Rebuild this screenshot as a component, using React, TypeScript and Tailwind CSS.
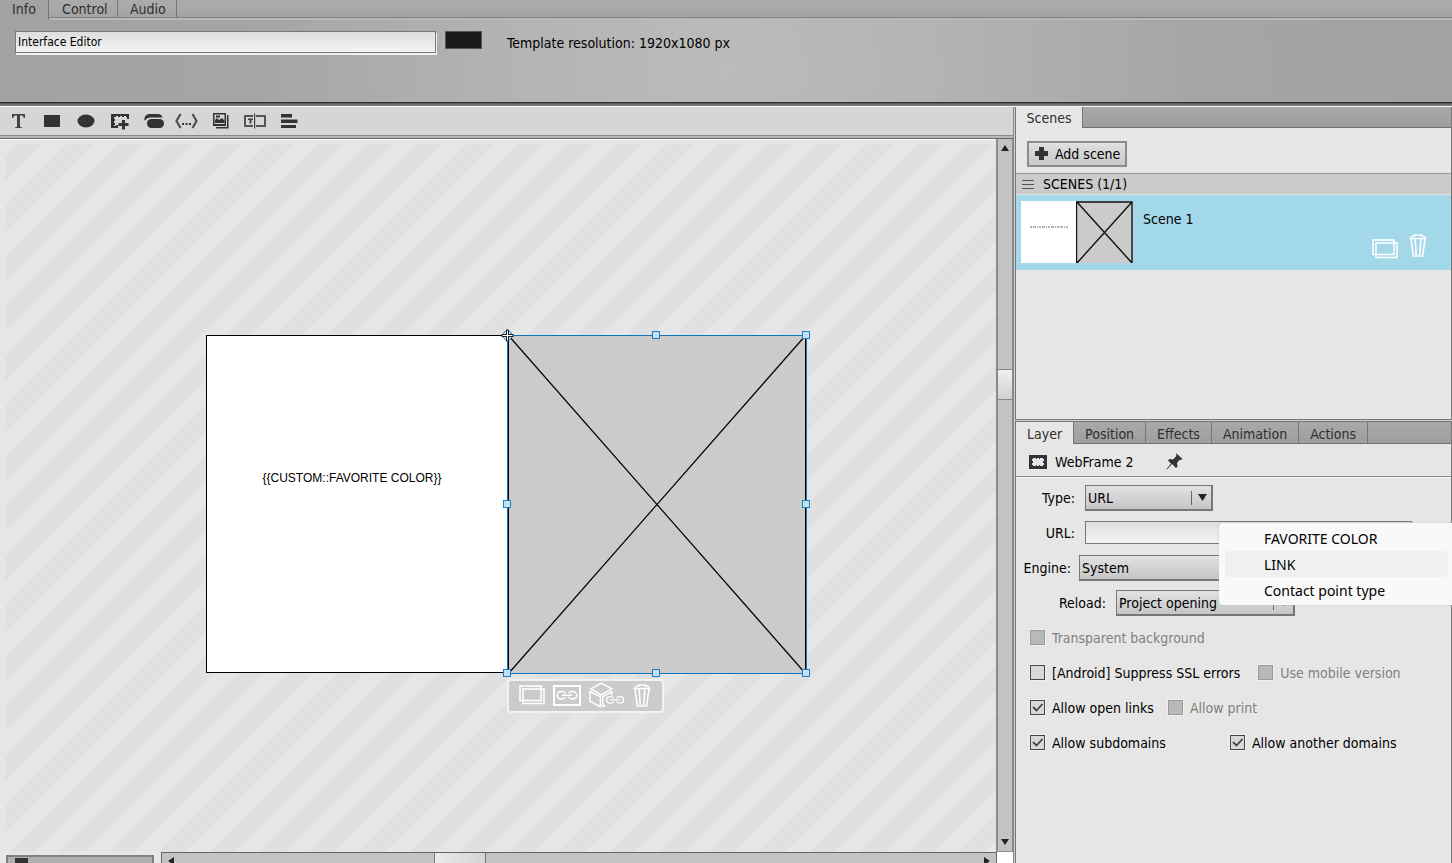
import { useState } from "react";
import type { ReactNode } from "react";
import clsx from "clsx";

/* --- ICONS --- */

function DuplicateIcon() {
  return (
    <svg width="26" height="20" viewBox="0 0 26 20" fill="none" stroke="#fff" strokeWidth="1.6">
      <rect x="1" y="1" width="21" height="14.5" />
      <rect x="4" y="4" width="21" height="14.5" />
    </svg>
  );
}

function TrashIcon() {
  return (
    <svg width="18" height="23" viewBox="0 0 18 23" fill="none" stroke="#fff" strokeWidth="1.6">
      <path d="M0.5 4.5h17M2 3.600C2 2.600 3 2.200 5.500 2V1h7v1C15 2.200 16 2.600 16 3.600M2 5l2.400 17h9.200L16 5M6.200 5l1 16M11.800 5l-1 16" />
    </svg>
  );
}

function FrameLinkIcon() {
  return (
    <svg width="28" height="21" viewBox="0 0 28 21" fill="none" stroke="#fff" strokeWidth="1.5">
      <rect x="1" y="1" width="26" height="19" strokeWidth="2" />
      <path d="M12.5 8.4A4 4 0 0 0 9 6.6H8a3.7 3.7 0 0 0 0 7.4h1a4 4 0 0 0 3.500-1.800M15.500 8.400A4 4 0 0 1 19 6.600h1a3.700 3.700 0 0 1 0 7.400h-1a4 4 0 0 1-3.500-1.800M9 10.300h10" />
    </svg>
  );
}

function CubeLinkIcon() {
  return (
    <svg width="36" height="26" viewBox="0 0 38 27" fill="none" stroke="#fff" strokeWidth="1.6">
      <path d="M2 7 13 1l11 6-11 6.500z" />
      <path d="M1 9.500v10.500l11 6V15.500zM14.500 26V15.500L24 10v4M14.500 26l3-1.500" />
      <path d="M26 16.800a3.500 3.500 0 0 0-3-1.600h-1a3.400 3.400 0 0 0 0 6.800h1a3.500 3.500 0 0 0 3-1.600M29 16.800a3.500 3.500 0 0 1 3-1.600h1a3.400 3.400 0 0 1 0 6.800h-1a3.500 3.500 0 0 1-3-1.600M22.500 18.600h10" strokeWidth="1.400" />
    </svg>
  );
}

function FrameIcon() {
  return (
    <svg width="18" height="14" viewBox="0 0 18 14">
      <path fill="#333" fillRule="evenodd" d="M0 0h18v14H0zM4 3v1H3v2h1v2H3v2h1v1h3v-1h1v1h2v-1h1v1h3v-1h1V8h-1V6h1V4h-1V3h-3v1h-1V3H8v1H7V3z" />
    </svg>
  );
}

const tools: { name: string; icon: ReactNode }[] = [
  {
    name: "Text",
    icon: <path d="M6 5h13v4h-1.200c-.3-1.700-1-2.500-2.500-2.500h-1.300V17c0 1 .6 1.300 2 1.300V19H9v-.7c1.400 0 2-.3 2-1.300V6.500H9.700C8.200 6.500 7.500 7.300 7.200 9H6z" fill="#444" />,
  },
  { name: "Rectangle", icon: <path d="M4 6h16v12H4z" /> },
  { name: "Ellipse", icon: <ellipse cx="12" cy="12" rx="8.500" ry="6.500" /> },
  {
    name: "Web frame",
    icon: (
      <>
        <path d="M3 5h18v5h-2V8h-1V7h-2v1h-2V7h-2v1h-2V7H8v1H6v2h1v2H6v2h1v2H6v1h2v-1h2v3H3z" />
        <path d="M14 11h3v3h3.500v3H17v3.500h-3V17h-3.500v-3H14z" />
      </>
    ),
  },
  {
    name: "Button",
    icon: (
      <>
        <rect x="5" y="10" width="17" height="9" rx="4.500" />
        <path d="M2.500 11C2 7.500 4.500 5 7.500 5H16c2.500 0 4 1.300 4.500 3.500H9C6 8.500 4 9.500 3.500 11.500z" />
      </>
    ),
  },
  {
    name: "Code",
    icon: (
      <>
        <path d="M5.500 5 1.500 12l4 7M17.500 5l4 7-4 7" fill="none" stroke="#505050" strokeWidth="2.200" />
        <path d="M7 14h2v2H7zM10.500 14h2v2h-2zM14 14h2v2h-2z" />
      </>
    ),
  },
  {
    name: "Gallery",
    icon: (
      <>
        <path fillRule="evenodd" d="M4 4h13v13H4zM5.500 5.500V15h10V5.500z" />
        <path d="M6 14v-3l2-2 2 2 3-2 2.500 2.500V14zM7 6.500h4v2H7z" />
        <path d="M18 6h1.500v13.500H7V18h11z" />
      </>
    ),
  },
  {
    name: "Input field",
    icon: (
      <>
        <path d="M10 7H2v10h8M13 7h9v10h-9" fill="none" stroke="#555" strokeWidth="2" />
        <path d="M11 4.500h1.200v15H11zM5 9.500h5V11H8.500v3.500H6.500V11H5z" fill="#444" />
      </>
    ),
  },
  { name: "Align", icon: <path d="M4 5h11v3.500H4zM4 10.500h16.500V14H4zM4 16h15v3H4z" /> },
];

/* --- SHARED PIECES --- */

function Select({ id, options, className }: { id: string; options: string[]; className: string }) {
  return (
    <div className={clsx("relative h-[26px]", className)}>
      <select
        id={id}
        className="h-full w-full appearance-none border border-r-2 border-b-2 border-[#777] bg-linear-to-b from-[#e2e2e2] to-[#c6c6c6] pt-px pl-[2px] outline-none"
      >
        {options.map((o) => (
          <option key={o}>{o}</option>
        ))}
      </select>
      <span className="pointer-events-none absolute inset-y-0 right-0 flex items-center gap-[6px] pr-[6px]">
        <span className="h-[14px] w-px bg-[#666]" />
        <svg width="9" height="7" viewBox="0 0 9 7">
          <path d="M0 0h9L4.500 7z" fill="#222" />
        </svg>
      </span>
    </div>
  );
}

function Check({ label, checked = false, disabled = false }: { label: string; checked?: boolean; disabled?: boolean }) {
  const [on, setOn] = useState(checked);
  return (
    <label className={clsx("flex items-center gap-[7px] whitespace-nowrap", disabled && "text-[#808080]")}>
      <span className="relative h-[15px] w-[15px]">
        <input
          type="checkbox"
          checked={on}
          disabled={disabled}
          onChange={() => setOn(!on)}
          className="block h-[15px] w-[15px] appearance-none border border-[#444] bg-[#d8d8d8] shadow-[0_0_0_1px_#f0f0f0] disabled:border-[#999] disabled:bg-[#b9b9b9]"
        />
        {on && (
          <svg className="pointer-events-none absolute inset-0" width="15" height="15" viewBox="0 0 15 15">
            <path d="M3 7l3.500 3.500L12.500 4" fill="none" stroke="#444" strokeWidth="1.800" />
          </svg>
        )}
      </span>
      {label}
    </label>
  );
}

const layerTabs = ["Layer", "Position", "Effects", "Animation", "Actions"];

/* --- HEADER --- */

function Header() {
  return (
    <header className="flex h-[107px] shrink-0 flex-col border-b border-[#f4f4f4] bg-[radial-gradient(circle_at_50%_66%,#bbbbbb_0,#b4b4b4_200px,#a5a5a5_480px,#a2a2a2_100%)]">
      <nav className="flex h-[20px] text-[#2e2e2e]">
        <button className="border-r border-[#777] px-[12px] pb-[2px]">Info</button>
        <div className="flex flex-1 border-b-2 border-[#b8b8b8] bg-linear-to-b from-[#ababab] to-[#a3a3a3]">
          <div className="flex flex-1 border-b border-[#808080]">
            <button className="w-[69px] border-r border-[#777] pl-[4px]">Control</button>
            <button className="w-[59px] border-r border-[#777] pl-[2px]">Audio</button>
          </div>
        </div>
      </nav>
      <div className="flex flex-1 items-start pt-[11px] pl-[15px]">
        <input
          aria-label="Name"
          defaultValue="Interface Editor"
          className="h-[22px] w-[421px] border border-[#777] bg-linear-to-b from-[#dedede] to-[#f3f3f3] px-[2px] text-[12px] shadow-[1px_2px_0_#f0f0f0] outline-none"
        />
        <button aria-label="Background colour" className="ml-[9px] h-[18px] w-[37px] border border-[#555] bg-[#1a1a1a]" />
        <span className="ml-[25px] pt-[3px]">Template resolution: 1920x1080 px</span>
      </div>
      <div className="h-[4px] border-t border-[#2c2c2c] bg-linear-to-b from-[#555] to-[#8a8a8a]" />
    </header>
  );
}

/* --- CANVAS --- */

const handles = [
  { x: 149, y: 0 },
  { x: 299, y: 0 },
  { x: 0, y: 169 },
  { x: 299, y: 169 },
  { x: 0, y: 338 },
  { x: 149, y: 338 },
  { x: 299, y: 338 },
];

function Stage() {
  return (
    <div className="absolute top-[195px] left-[206px] flex h-[338px] w-[601px]">
      <div className="flex w-[302px] justify-center border border-black bg-white pt-[133px] pr-[10px] font-['Liberation_Sans',sans-serif] text-[12px]">
        {"{{CUSTOM::FAVORITE COLOR}}"}
      </div>
      <div className="relative w-[299px] bg-[#cbcbcb]">
        <svg className="absolute top-[-6px] left-[-7px]" width="313" height="352" viewBox="-6.500 -6.500 313 352">
          <path d="M1 0 298 338M298 0 1 338" stroke="#000" strokeWidth="1.200" />
          <path d="M1 0V338M298 0V338" stroke="#000" strokeWidth="1" />
          <path d="M0 0H299V338H0Z" fill="none" stroke="#0e76bd" />
          {handles.map((h) => (
            <rect key={`${h.x}-${h.y}`} x={h.x - 4} y={h.y - 4} width="7" height="7" fill="#c3dff0" stroke="#1b7fc4" />
          ))}
          <circle r="4.500" fill="#c3dff0" stroke="#1b7fc4" />
          <path d="M-6 0H6M0-6V6" stroke="#222" strokeWidth="3" />
          <path d="M-5 0H5M0-5V5" stroke="#fff" strokeWidth="1" />
        </svg>
        <div className="absolute top-[344px] left-[-1px] flex h-[34px] w-[157px] items-center gap-[8px] rounded-[4px] border-2 border-[#f2f2f2] bg-[#cbcbcb] pb-[2px] pl-[10px]">
          <button aria-label="Duplicate"><DuplicateIcon /></button>
          <button aria-label="Link"><FrameLinkIcon /></button>
          <button aria-label="Link object"><CubeLinkIcon /></button>
          <button aria-label="Delete"><TrashIcon /></button>
        </div>
      </div>
    </div>
  );
}

function Editor() {
  return (
    <main className="flex min-w-0 flex-1 flex-col border-r border-[#888] bg-[#e6e6e6]">
      <div className="flex h-[28px] shrink-0 bg-[#d6d6d6]">
        <div className="flex w-[307px] items-center justify-between px-[3px]">
          {tools.map((t) => (
            <button key={t.name} aria-label={t.name} className="flex w-[30px] justify-center">
              <svg width="24" height="24" viewBox="0 0 24 24" fill="#333">{t.icon}</svg>
            </button>
          ))}
        </div>
      </div>
      <div className="h-[4px] shrink-0 border-y border-t-[#8a8a8a] border-b-[#666] bg-[#b9b7b9]" />
      <div className="flex min-h-0 flex-1">
        <div className="relative min-w-0 flex-1 overflow-hidden border-t border-white pt-[4px] pl-[5px]">
          <div className="h-full bg-[linear-gradient(135deg,#e6e6e6_12.5%,#e0e0e0_12.5%,#e0e0e0_37.5%,#e6e6e6_37.5%,#e6e6e6_62.5%,#e0e0e0_62.5%,#e0e0e0_87.5%,#e6e6e6_87.5%)] bg-size-[50px_50px]" />
          <Stage />
        </div>
        <div className="flex w-[17px] flex-col items-center border border-t-0 border-l-2 border-[#8a8a8a] bg-[#c3c3c3]">
          <button aria-label="Scroll up" className="flex h-[17px] items-center">
            <svg width="8" height="6" viewBox="0 0 8 6"><path d="M4 0l4 6H0z" fill="#222" /></svg>
          </button>
          <div className="h-[213px]" />
          <div className="h-[31px] w-full border-y border-[#888] bg-linear-to-b from-[#f0f0f0] to-[#d0d0d0]" />
          <div className="flex-1" />
          <button aria-label="Scroll down" className="flex h-[18px] items-center">
            <svg width="8" height="6" viewBox="0 0 8 6"><path d="M4 6l4-6H0z" fill="#222" /></svg>
          </button>
        </div>
      </div>
      <div className="flex h-[11px] shrink-0 overflow-hidden">
        <div className="mt-[3px] ml-[6px] w-[148px] border-2 border-b-0 border-[#808080] bg-[#b0b0b0] pl-[7px]">
          <div className="mt-px h-[6px] w-[13px] bg-[#333]" />
        </div>
        <div className="ml-[7px] flex flex-1 border-t border-l border-[#666] bg-[#c3c3c3]">
          <svg className="mt-[4px] ml-[6px]" width="6" height="8" viewBox="0 0 6 8"><path d="M6 0v8L0 4z" fill="#222" /></svg>
          <div className="ml-[260px] w-[52px] border-x border-[#777] bg-linear-to-r from-[#eaeaea] to-[#d4d4d4]" />
          <svg className="mt-[4px] mr-[6px] ml-auto" width="6" height="8" viewBox="0 0 6 8"><path d="M0 0v8l6-4z" fill="#222" /></svg>
        </div>
        <div className="w-[17px] border-l border-[#666] bg-white" />
      </div>
    </main>
  );
}

/* --- SIDE PANELS --- */

function ScenesPanel() {
  return (
    <section className="flex h-[313px] shrink-0 flex-col border border-t-0 border-[#777] bg-[#e6e6e6]">
      <nav className="flex h-[21px] text-[#2e2e2e]">
        <button className="w-[67px] border-r border-[#777] pt-px">Scenes</button>
        <div className="flex-1 border-b border-[#707070] bg-linear-to-b from-[#a9a9a9] to-[#9e9e9e]" />
      </nav>
      <div className="flex h-[45px] items-center pt-[6px] pl-[11px]">
        <button className="flex h-[26px] items-center gap-[6px] border-2 border-[#8c8c8c] bg-linear-to-b from-[#e0e0e0] to-[#c9c9c9] px-[5px]">
          <svg width="15" height="15" viewBox="0 0 15 15"><path d="M5 1h5v4h4v5h-4v4H5v-4H1V5h4z" fill="#333" /></svg>
          Add scene
        </button>
      </div>
      <div className="flex h-[22px] items-center gap-[9px] border-t border-b border-t-[#999] border-b-[#e0e0e0] bg-[#cbcbcb] pl-[6px]">
        <svg width="12" height="11" viewBox="0 0 12 11"><path d="M0 1.500h12M0 5.500h12M0 9.500h12" stroke="#555" /></svg>
        SCENES (1/1)
      </div>
      <div className="flex h-[75px] bg-[#a3d7ea] pt-[6px] pl-[5px]">
        <div className="flex h-[62px] w-[112px]">
          <div className="flex w-[55px] items-center justify-center bg-white pb-[10px]">
            <svg width="40" height="4" viewBox="0 0 40 4"><path d="M1 2h38" stroke="#a9b6b6" strokeWidth="2" strokeDasharray="2 1 3 1 1 1" /></svg>
          </div>
          <svg width="57" height="62" viewBox="0 0 57 62">
            <rect width="57" height="62" fill="#cbcbcb" />
            <path d="M0.500 62V1H56V62M1 1l55 61M56 1 1 62" fill="none" stroke="#111" strokeWidth="1.400" />
          </svg>
        </div>
        <span className="pt-[9px] pl-[10px]">Scene 1</span>
        <div className="mr-[24px] ml-auto flex items-center gap-[11px] pt-[20px]">
          <button aria-label="Duplicate scene" className="pt-[6px]"><DuplicateIcon /></button>
          <button aria-label="Delete scene"><TrashIcon /></button>
        </div>
      </div>
    </section>
  );
}

function VariableMenu() {
  const items = ["FAVORITE COLOR", "LINK", "Contact point type"];
  return (
    <div
      role="menu"
      className="absolute top-[8px] right-[-1px] z-10 flex w-[233px] flex-col rounded-l-[4px] bg-[#f9f9f9] py-[2px] pr-[4px] pl-[6px] font-['Noto_Sans',sans-serif] shadow-[0_0_2px_#bbb]"
    >
      {items.map((item) => (
        <button
          key={item}
          role="menuitem"
          className={clsx("h-[26px] rounded-[4px] pt-px pl-[39px] text-left", item === "LINK" && "bg-[#f0f0f0]")}
        >
          {item}
        </button>
      ))}
    </div>
  );
}

function LayerPanel() {
  const [tab, setTab] = useState("Layer");
  return (
    <section className="mt-px flex min-h-0 flex-1 flex-col border border-b-0 border-[#777] bg-[#e6e6e6]">
      <nav className="flex h-[22px] border-b border-[#707070] bg-linear-to-b from-[#a9a9a9] to-[#9e9e9e] text-[#2e2e2e]">
        {layerTabs.map((t) => (
          <button
            key={t}
            onClick={() => setTab(t)}
            className={clsx("border-r border-[#777] px-[11px] pt-[2px]", t === tab && "-mb-px bg-[#e6e6e6]")}
          >
            {t}
          </button>
        ))}
      </nav>
      <div className="flex h-[33px] shrink-0 items-center border-b border-[#888] pt-[4px] pl-[13px] shadow-[0_1px_0_#f8f8f8]">
        <FrameIcon />
        <span className="ml-[8px]">WebFrame 2</span>
        <button aria-label="Pin" className="mb-[2px] ml-[32px]">
          <svg width="17" height="17" viewBox="0 0 17 17">
            <path d="M10.500 0.500 16.500 6l-1.500 1-1-.5-3 3.500.5 3.500-1.500 1.500-4-4L1 16.500l-.5-.5 4.500-5.500-3-3L3.500 6l3.500.5L10.500 3 10 1.500z" fill="#333" />
          </svg>
        </button>
      </div>
      <form className="flex flex-col pt-[3px]" onSubmit={(e) => e.preventDefault()}>
        <div className="flex h-[35px] items-center">
          <label htmlFor="type" className="mr-[10px] w-[59px] text-right">Type:</label>
          <Select id="type" options={["URL"]} className="w-[128px]" />
        </div>
        <div className="relative flex h-[35px] items-center">
          <label htmlFor="url" className="mr-[10px] w-[59px] text-right">URL:</label>
          <input id="url" className="h-[23px] w-[327px] border border-[#777] bg-linear-to-b from-[#dedede] to-[#f3f3f3] px-[2px] outline-none" />
          <VariableMenu />
        </div>
        <div className="flex h-[35px] items-center">
          <label htmlFor="engine" className="mr-[8px] w-[55px] text-right">Engine:</label>
          <Select id="engine" options={["System"]} className="w-[192px]" />
        </div>
        <div className="flex h-[35px] items-center">
          <label htmlFor="reload" className="mr-[10px] w-[90px] text-right">Reload:</label>
          <Select id="reload" options={["Project opening"]} className="w-[179px]" />
        </div>
        <div className="flex h-[35px] items-center pl-[14px]">
          <Check label="Transparent background" disabled />
        </div>
        <div className="flex h-[35px] items-center gap-[18px] pl-[14px]">
          <Check label="[Android] Suppress SSL errors" />
          <Check label="Use mobile version" disabled />
        </div>
        <div className="flex h-[35px] items-center gap-[14px] pl-[14px]">
          <Check label="Allow open links" checked />
          <Check label="Allow print" disabled />
        </div>
        <div className="grid h-[35px] grid-cols-[200px_1fr] items-center pl-[14px]">
          <Check label="Allow subdomains" checked />
          <Check label="Allow another domains" checked />
        </div>
      </form>
    </section>
  );
}

export default function App() {
  return (
    <div className="flex h-screen flex-col overflow-hidden bg-[#d0d0d0] font-['DejaVu_Sans_Condensed','Open_Sans',sans-serif] text-[14px] leading-[18px] text-black">
      <Header />
      <div className="flex min-h-0 flex-1">
        <Editor />
        <aside className="ml-px flex w-[437px] shrink-0 flex-col">
          <ScenesPanel />
          <LayerPanel />
        </aside>
      </div>
    </div>
  );
}
